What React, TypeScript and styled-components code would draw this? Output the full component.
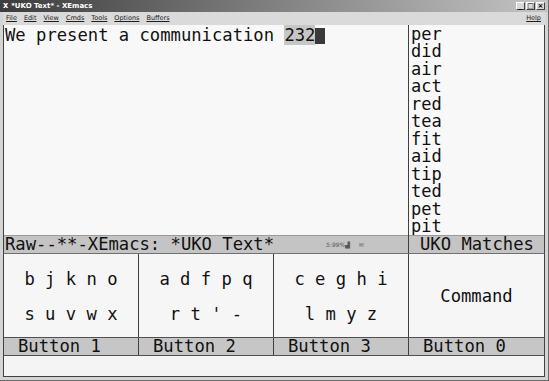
import React from "react";
import styled, { createGlobalStyle } from "styled-components";

const GlobalStyle = createGlobalStyle`
  html, body {
    margin: 0;
    padding: 0;
    background: #d6d6d6;
  }
  * { box-sizing: border-box; }
`;

const MONO = `"DejaVu Sans Mono", "Liberation Mono", monospace`;
const UI = `"DejaVu Sans", "Liberation Sans", sans-serif`;

const Window = styled.div`
  width: 549px;
  height: 381px;
  display: flex;
  flex-direction: column;
  background: #d4d4d4;
  padding: 0 3px 3px 3px;
  border-right: 1px solid #6a6a6a;
  border-bottom: 1px solid #6a6a6a;
  overflow: hidden;
`;

const TitleBar = styled.div`
  height: 12px;
  margin: 0 -3px;
  padding: 0 3px;
  display: flex;
  align-items: center;
  background: linear-gradient(90deg, #3c3c3c 0%, #7a7a7a 45%, #c4c4c4 100%);
  color: #fff;
  font-family: ${UI};
  font-size: 7px;
  font-weight: bold;
`;

const TitleText = styled.span`
  margin-left: 3px;
  flex: 1;
`;

const WinButtons = styled.div`
  display: flex;
  gap: 1px;
`;

const WinButton = styled.div`
  width: 9px;
  height: 8px;
  background: #d8d8d8;
  border: 1px solid #fff;
  border-right-color: #404040;
  border-bottom-color: #404040;
  color: #000;
  font-size: 7px;
  line-height: 6px;
  text-align: center;
  font-weight: bold;
`;

const MenuBar = styled.div`
  height: 13px;
  display: flex;
  align-items: center;
  gap: 7px;
  padding-left: 3px;
  font-family: ${UI};
  font-size: 6.5px;
  color: #202020;
  background: #dadada;
`;

const MenuItem = styled.span<{ $right?: boolean }>`
  margin-left: ${(p) => (p.$right ? "auto" : "0")};
  margin-right: ${(p) => (p.$right ? "4px" : "0")};
  text-decoration: underline;
  text-decoration-thickness: 0.5px;
  text-underline-offset: 1px;
`;

const Grid = styled.div`
  display: grid;
  grid-template-columns: 134px 134px 134px 1fr;
  column-gap: 1px;
  background: #404040;
  border-left: 1px solid #404040;
  border-right: 1px solid #404040;
`;

const MainRow = styled(Grid)`
  height: 210px;
`;

const TextPane = styled.div`
  grid-column: 1 / span 3;
  background: #f8f8f8;
  font-family: ${MONO};
  font-size: 17.2px;
  line-height: 17.5px;
  color: #111;
  padding: 2px 0 0 1px;
  white-space: pre;
`;

const Region = styled.span`
  background: #c6c6c6;
`;

const Cursor = styled.span`
  display: inline-block;
  width: 10px;
  height: 16px;
  vertical-align: -3px;
  background: #3a3a3a;
`;

const MatchPane = styled.div`
  background: #f8f8f8;
  font-family: ${MONO};
  font-size: 17px;
  color: #111;
  padding: 1px 0 0 2px;
  overflow: hidden;
`;

const MatchWord = styled.div`
  height: 17.5px;
  line-height: 17.5px;
`;

const ModeRow = styled(Grid)`
  height: 18px;
`;

const ModeCell = styled.div<{ $span?: number }>`
  grid-column: span ${(p) => p.$span ?? 1};
  display: flex;
  align-items: center;
  background: #c4c4c4;
  border-top: 1px solid #9a9a9a;
  font-family: ${MONO};
  font-size: 17.2px;
  color: #111;
  padding-left: ${(p) => (p.$span === 3 ? "1px" : "11px")};
  white-space: pre;
  overflow: hidden;
`;

const Status = styled.span`
  margin-left: 52px;
  font-family: ${UI};
  font-size: 6px;
  font-style: italic;
  color: #555;
  display: flex;
  align-items: center;
  gap: 9px;
`;

const KeyRow = styled(Grid)`
  height: 85px;
  border-top: 1px solid #707070;
`;

const KeyPanel = styled.div`
  background: #f6f6f6;
  display: flex;
  flex-direction: column;
  align-items: center;
  justify-content: center;
  gap: 17px;
  font-family: ${MONO};
  font-size: 17.2px;
  line-height: 18px;
  color: #111;
  white-space: pre;
  padding-top: 2px;
`;

const LabelRow = styled(Grid)`
  height: 19px;
  border-top: 1px solid #505050;
  border-bottom: 1px solid #505050;
`;

const Label = styled.div`
  background: #c6c6c6;
  font-family: ${MONO};
  font-size: 17.2px;
  line-height: 17px;
  color: #111;
  padding-left: 14px;
  white-space: pre;
`;

const Minibuffer = styled.div`
  height: 21px;
  background: #f4f4f4;
  border-left: 1px solid #404040;
  border-right: 1px solid #404040;
  border-bottom: 1px solid #404040;
`;

const matches = ["per", "did", "air", "act", "red", "tea", "fit", "aid", "tip", "ted", "pet", "pit"];

const panels = [
  ["b j k n o", "s u v w x"],
  ["a d f p q", "r t ' -"],
  ["c e g h i", "l m y z"],
  ["Command"],
];

const labels = ["Button 1", "Button 2", "Button 3", "Button 0"];

const menus = ["File", "Edit", "View", "Cmds", "Tools", "Options", "Buffers"];

export default function App() {
  return (
    <>
      <GlobalStyle />
      <Window>
        <TitleBar>
          <span style={{ fontSize: 8 }}>ⅹ</span>
          <TitleText>*UKO Text* - XEmacs</TitleText>
          <WinButtons>
            <WinButton>_</WinButton>
            <WinButton>□</WinButton>
            <WinButton>×</WinButton>
          </WinButtons>
        </TitleBar>
        <MenuBar>
          {menus.map((m) => (
            <MenuItem key={m}>{m}</MenuItem>
          ))}
          <MenuItem $right>Help</MenuItem>
        </MenuBar>
        <MainRow>
          <TextPane>
            We present a communication <Region>232</Region>
            <Cursor />
          </TextPane>
          <MatchPane>
            {matches.map((w) => (
              <MatchWord key={w}>{w}</MatchWord>
            ))}
          </MatchPane>
        </MainRow>
        <ModeRow>
          <ModeCell $span={3}>
            Raw--**-XEmacs: *UKO Text*
            <Status>
              <span>5:99%▟</span>
              <span>✉</span>
            </Status>
          </ModeCell>
          <ModeCell>UKO Matches</ModeCell>
        </ModeRow>
        <KeyRow>
          {panels.map((rows, i) => (
            <KeyPanel key={i}>
              {rows.map((r) => (
                <div key={r}>{r}</div>
              ))}
            </KeyPanel>
          ))}
        </KeyRow>
        <LabelRow>
          {labels.map((l) => (
            <Label key={l}>{l}</Label>
          ))}
        </LabelRow>
        <Minibuffer />
      </Window>
    </>
  );
}
